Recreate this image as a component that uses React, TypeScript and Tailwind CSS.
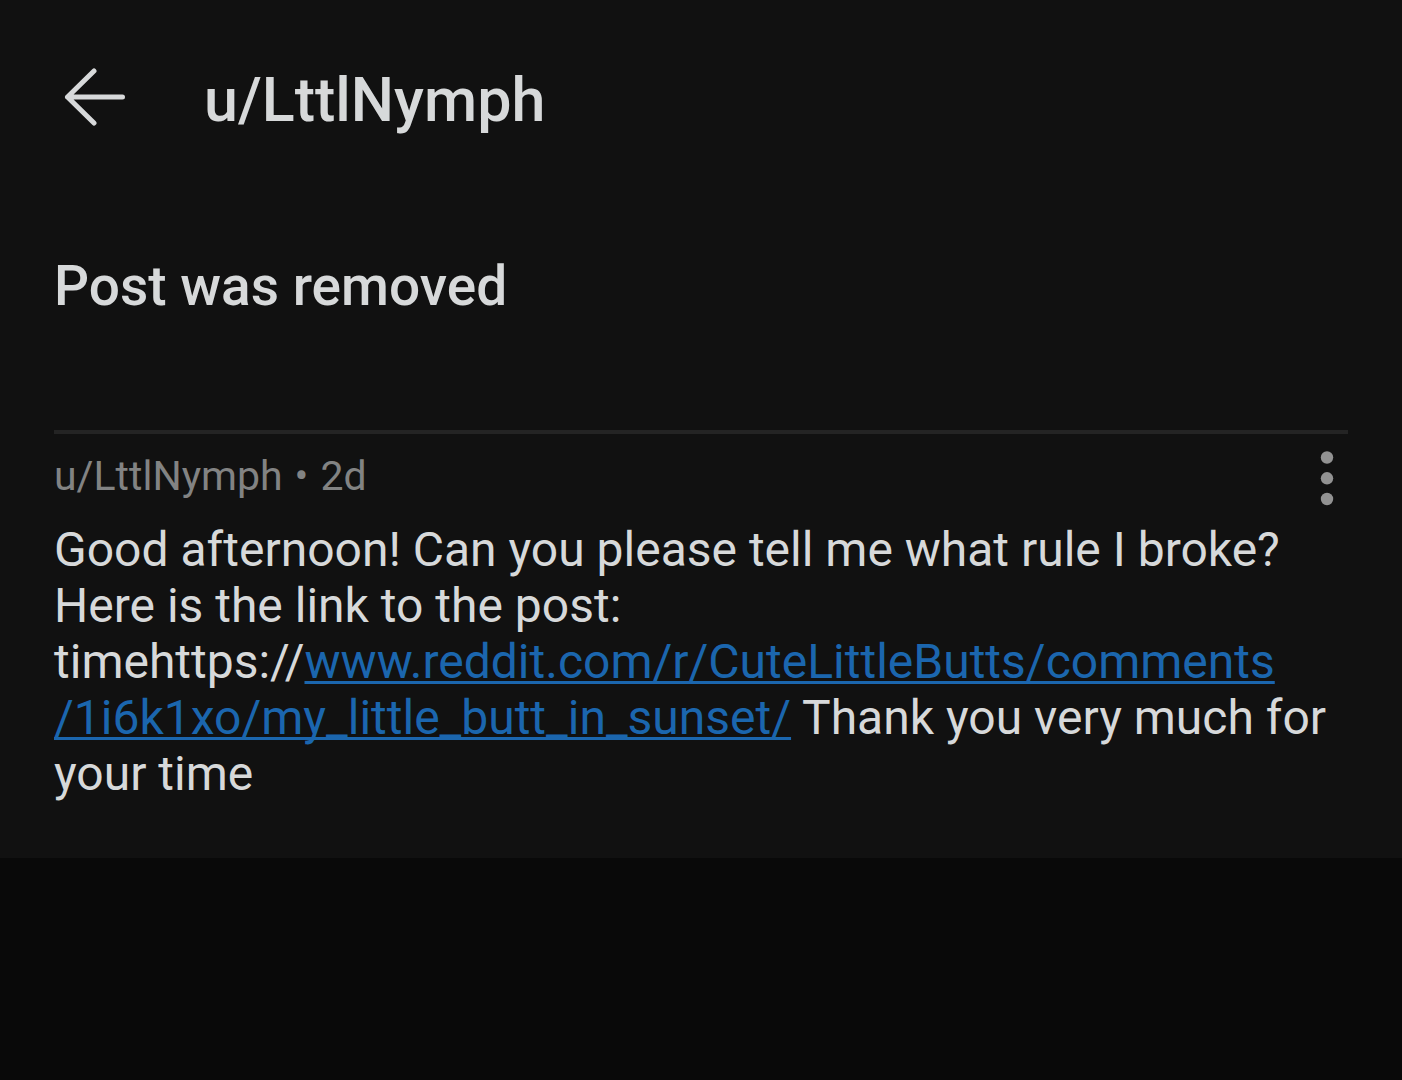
const postPath = ["www.reddit.com/r/CuteLittleButts/comments", "/1i6k1xo/my_little_butt_in_sunset/"];

export default function App() {
  return (
    <div className="min-h-screen bg-[#090909] font-['Roboto',sans-serif] text-[#d7d9da]">
      <main className="bg-[#111111] px-[54px] pt-16 pb-14">
        <header className="flex items-center gap-[78px]">
          <button type="button" aria-label="Back" className="ml-2 shrink-0">
            <BackIcon className="h-16 w-16" />
          </button>
          <h1 className="text-[61px] leading-[72px] font-medium">u/LttlNymph</h1>
        </header>

        <h2 className="mt-[118px] text-[55px] leading-[64px] font-medium">Post was removed</h2>

        <article className="mt-28 border-t-4 border-[#242424]">
          <div className="flex items-center justify-between pt-3">
            <p className="flex gap-3 text-[41px] leading-[56px] text-[#828383]">
              <span>u/LttlNymph</span>
              <span>•</span>
              <span>2d</span>
            </p>
            <button type="button" aria-label="More options" className="mr-3 text-[#929292]">
              <DotsIcon className="h-[60px] w-[18px]" />
            </button>
          </div>
          <p className="mt-4 text-[48px] leading-[56px]">
            Good afternoon! Can you please tell me what rule I broke?
            <br />
            Here is the link to the post:
            <br />
            timehttps://
            <a
              href={`https://${postPath.join("")}`}
              className="text-[#1b66ae] underline decoration-[3px] underline-offset-3 [text-decoration-skip-ink:none]"
            >
              {postPath[0]}
              <wbr />
              {postPath[1]}
            </a>{" "}
            Thank you very much for your time
          </p>
        </article>
      </main>
    </div>
  );
}

function BackIcon({ className }: { className?: string }) {
  return (
    <svg className={className} fill="none" viewBox="0 0 64 64" stroke="currentColor" strokeWidth={5}>
      <path strokeLinecap="round" strokeLinejoin="round" d="M32 3 5.500 29 32 55M5.500 29H60.500" />
    </svg>
  );
}

function DotsIcon({ className }: { className?: string }) {
  return (
    <svg className={className} fill="currentColor" viewBox="0 0 18 60">
      <circle cx="9" cy="11.500" r="6.200" />
      <circle cx="9" cy="32.300" r="6.200" />
      <circle cx="9" cy="53" r="6.200" />
    </svg>
  );
}
